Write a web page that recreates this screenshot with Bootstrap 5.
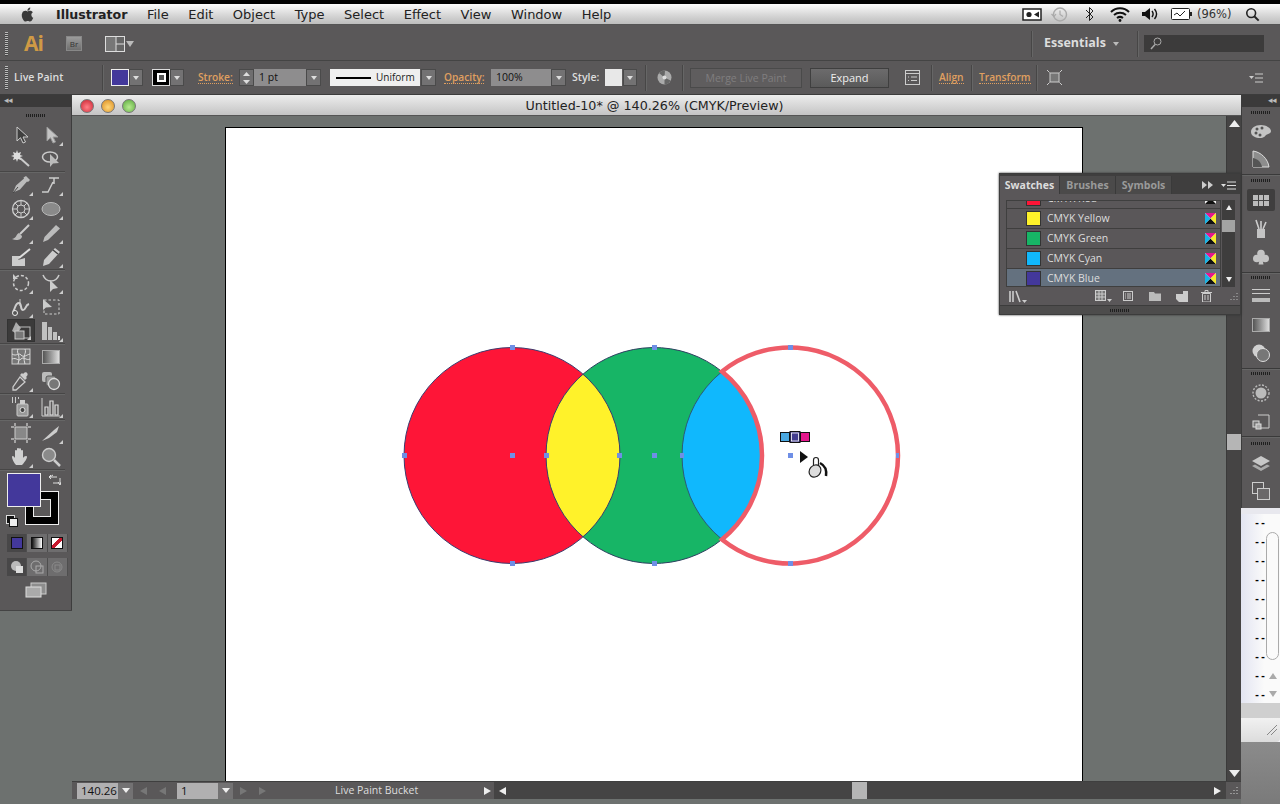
<!DOCTYPE html>
<html lang="en"><head><meta charset="utf-8"><title>Illustrator</title>
<link href="https://cdn.jsdelivr.net/npm/bootstrap@5.3.0/dist/css/bootstrap.min.css" rel="stylesheet">
<script src="https://cdn.jsdelivr.net/npm/bootstrap@5.3.0/dist/js/bootstrap.bundle.min.js"></script>
<style>
html,body{height:804px;overflow:hidden}
body{background:#6d716f;font-family:"Open Sans","Liberation Sans",sans-serif;font-size:11px;color:#ddd}
svg{display:block;flex:none}
.stage{width:1280px;height:804px}
.stage>*{flex:none}
.topblack{height:4px;background:#000}
.macbar{height:21px;background:linear-gradient(#fbfbfb,#d4d4d4 60%,#bdbdbd);border-bottom:1px solid #555;color:#222;font:13px "DejaVu Sans","Liberation Sans",sans-serif;padding-left:19px}
.macmenu{gap:19.5px;margin-left:20px;align-items:baseline}
.macmenu b{font-size:12.6px}
.pct{font-size:11.5px;width:31px;white-space:nowrap;color:#333}
.appbar{height:36px;background:#5a5859;border-bottom:1px solid #444;padding-top:2px}
.ailogo{font:bold 21px "Open Sans",sans-serif;color:#cf9a45;margin:-2px 0 0 16px;width:24px;letter-spacing:-1px}
.brbox{width:16px;height:15px;background:linear-gradient(#9b9b9b,#6f6f6f);border:1px solid #888;color:#333;font-size:8px;text-align:center;line-height:13px;margin-left:18px}
.ess{font-weight:700;font-size:12.5px;color:#ddd;width:62px;white-space:nowrap}
.searchbox{width:120px;height:17px;background:#3c3b3b;margin-left:6px;padding-left:6px;margin-right:16px}
.vdiv{width:1px;height:26px;background:#474646;box-shadow:1px 0 0 #666}
.grip{width:3px;height:24px;margin-left:5px;background:repeating-linear-gradient(#bbb 0 1px,#444 1px 2px)}
.ctlbar{height:34px;background:#5a5859;border-bottom:1px solid #3c3c3c}
.ctlbar .lbl{font-size:10.5px;color:#ddd;white-space:nowrap}
.orange{display:inline-block;margin-top:2px;color:#e0a060;font-size:10.2px;font-weight:600;white-space:nowrap;border-bottom:1px dotted #e0a060;line-height:12px}
.dd{height:17px;background:#737273;border:1px solid #4a4a4a;display:flex;align-items:center;justify-content:center}
.dd::after{content:"";border:3.5px solid transparent;border-top:4.5px solid #ddd;border-bottom:0}
.field{height:17px;background:#8e8d8e;color:#111;font-size:10.5px;line-height:17px;padding-left:5px}
.sw-blue{height:17px;background:#43389b;border:1px solid #eee}
.sw-white{height:17px;background:#e8e8e8}
.strokebtn{height:17px;background:#000;border:1px solid #ddd;display:flex;align-items:center;justify-content:center}
.strokebtn::after{content:"";width:9px;height:9px;border:2px solid #fff;background:#555}
.unif{height:17px;background:#efefef;color:#222;font-size:10px;display:flex;align-items:center;gap:5px;padding-left:6px}
.unif i{display:block;width:35px;height:2px;background:#000}
.spin{height:17px;background:#6f6e6f;border:1px solid #4a4a4a}
.btn.flat{height:20px;padding:0;font-size:11px;line-height:18px;border-radius:0;border:1px solid #3f3f3f;--bs-btn-color:#eee}
.btn.flatoff{background:#5f5d5e;color:#7f7e7e;border-color:#4a4a4a;font-size:10.5px}
.btn.flaton{background:linear-gradient(#6c6b6c,#5a5a5a);color:#eee;}
.g1{margin-left:1px}.g5{margin-left:5px}.g6{margin-left:6px}.g7{margin-left:7px}.g8{margin-left:8px}.g9{margin-left:9px}.g10{margin-left:10px}.g11{margin-left:11px}.g12{margin-left:12px}.g13{margin-left:13px}.g14{margin-left:14px}.g15{margin-left:15px}.g16{margin-left:16px}.g17{margin-left:17px}.g18{margin-left:18px}.g23{margin-left:23px}.g42{margin-left:42px}.g65{margin-left:65px}.g67{margin-left:67px}.g68{margin-left:68px}
.wd14{width:14px}.wd15{width:15px}.wd16{width:16px}.wd17{width:17px}.wd18{width:18px}.wd26{width:26px}.wd27{width:27px}.wd33{width:33px}.wd39{width:39px}.wd46{width:46px}.wd50{width:50px}.wd52{width:52px}.wd60{width:60px}.wd79{width:79px}.wd90{width:90px}.wd112{width:112px}
.mr17{margin-right:17px}.mr20{margin-right:20px}
.workrow{height:709px}
.leftcol{width:72px;flex:none}
.toolpanel{width:72px;height:515px;background:#5a5859;border-right:1px solid #3d3d3d;box-shadow:0 1px 0 #444}
.pnlhead{height:12px;background:#3b3a3a;color:#bbb;font-size:9px;line-height:10px;padding-left:4px;letter-spacing:-1px;flex:none}
.griprow{height:16px;display:flex;align-items:center;justify-content:center}
.gripx{width:20px;height:3px;background:repeating-linear-gradient(90deg,#1f1f1f 0 1px,transparent 1px 2px)}
.toolgrp{display:grid;grid-template-columns:30px 30px;grid-auto-rows:24px;padding-left:6px;border-bottom:1px solid #474646;box-shadow:0 1px 0 #666;margin-bottom:1px;margin-right:6px}
.tool{position:relative;display:flex;align-items:center;justify-content:center}
.tool.more::after{content:"";position:absolute;right:3px;bottom:1px;border:2px solid transparent;border-right-color:#ccc;border-bottom-color:#ccc}
.tool.sel{background:#3b3a3a;border:1px solid #333;margin:0 1px -1px 1px;height:23px}
.gradbox{width:18px;height:14px;border:1px solid #aaa;background:linear-gradient(90deg,#555,#ddd)}
.colors{position:relative;height:56px;margin-top:3px}
.fillbox{position:absolute;left:7px;top:0;width:34px;height:34px;background:#43389b;border:1px solid #eee;z-index:2}
.strokebox{position:absolute;left:25px;top:18px;width:34px;height:34px;background:#000;border:1px solid #eee;display:flex;align-items:center;justify-content:center}
.strokebox::after{content:"";width:18px;height:18px;background:#5a5859;border:1px solid #eee}
.swapic{position:absolute;left:49px;top:1px}
.defic{position:absolute;left:6px;top:42px}
.modes{display:flex;width:61px;height:18px;margin:5px 0 6px 7px;background:#6e6d6e}
.modes>div{flex:1;display:flex;align-items:center;justify-content:center;border-right:1px solid #4e4e4e}
.modes>div:first-child{background:#484748}
.m-blue,.m-grad,.m-none{width:12px;height:12px;border:1px solid #111}
.m-blue{background:#43389b}.m-grad{background:linear-gradient(90deg,#111,#fff)}
.m-none{background:linear-gradient(135deg,#fff 38%,#c8192f 38% 62%,#fff 62%)}
.docwin{width:1169px;flex:none;position:relative}
.titlebar{height:21px;background:linear-gradient(#ededed,#c4c4c4);border-bottom:1px solid #555;color:#222;font:12.7px/20px "DejaVu Sans","Liberation Sans",sans-serif;position:relative;text-align:center;padding:1px 4px 0 0}
.lights{position:absolute;left:8px;top:4px;gap:7px}
.light{width:14px;height:14px;border-radius:50%;border:1px solid #777}
.l-r{background:radial-gradient(circle at 50% 60%,#ff7f86,#c9202e)}
.l-y{background:radial-gradient(circle at 50% 60%,#ffd77a,#d98a1c)}
.l-g{background:radial-gradient(circle at 50% 60%,#b6e98f,#59a93b)}
.docmid{height:665px}
.canvasbg{flex:1;background:#6d716f;padding:11px 0 0 153px;overflow:hidden}
.artboard{width:858px;height:654px;background:#fff;border:1px solid #000;border-bottom:0;overflow:hidden}
.vscroll{width:15px;background:#454444;flex:none;border-left:1px solid #3a3a3a}
.spacer-a{height:307px}
.vthumb{height:16px;background:#b5b5b5}
.statusbar{height:18px;background:#5a5859;border-top:1px solid #3f3f3f;color:#ddd;font-size:10.5px}
.sfield{height:16px;background:#b1b0b1;color:#111;line-height:16px;padding-left:4px;overflow:hidden;white-space:nowrap;font-size:11.5px}
.sdd{height:16px;background:#737273;display:flex;align-items:center;justify-content:center}
.sdd::after{content:"";border:4px solid transparent;border-top:5px solid #eee;border-bottom:0}
.wd41{width:41px}.stxt{width:82px;text-align:center;white-space:nowrap}
.hscroll{width:732px;margin-left:3px;background:#454444;height:100%;position:relative;padding:0 5px}
.hthumb{position:absolute;left:358px;top:0;width:15px;height:17px;background:#b5b5b5}
.rcorner{width:15px;height:100%;display:flex;align-items:center;justify-content:center}
.tri-l,.tri-r{border:4.5px solid transparent;display:block;width:0;height:0}
.tri-l{border-right:7px solid #eee;border-left:0}.tri-r{border-left:7px solid #eee;border-right:0}
.tri-ld{border-right-color:#777}.tri-rd{border-left-color:#777}
.navgap{gap:12px;width:30px}
.swpanel{position:absolute;left:927px;top:78px;width:242px;height:142px;background:#5a5759;border:1px solid #3c3c3c;box-shadow:0 0 2px #333}
.swtabs{height:20px;background:#3f3e3e;border:0;padding-top:2px;--bs-nav-link-padding-x:0;--bs-nav-link-padding-y:0}
.swtab{height:18px;line-height:18px;font-weight:700;font-size:10.5px;color:#9a9a9a;text-align:center;background:#4b4a4a;border-right:1px solid #3a3a3a;width:56px}
.swtab.on{background:#5a5759;color:#ddd;width:60px}
.swbody{height:87px;margin:6px 5px 0 6px}
.swlist{flex:1;overflow:hidden;background:#5a5759;border:1px solid #3f3f3f;height:87px}
.swlist .list-group{margin-top:-12px;--bs-list-group-bg:transparent;--bs-list-group-border-color:#3f3e3e;--bs-list-group-border-radius:0}
.swrow{height:20px;display:flex;align-items:center;padding:0 4px 0 19px;background:#5a5759;color:#ddd;font-size:10.5px;gap:6px;border-width:0 0 1px 0}
.swrow.cur{background:#64717f}
.chip{width:15px;height:15px;border:1px solid #333;flex:none}
.chip-r{background:#fe1537}.chip-y{background:#fff22a}.chip-g{background:#17b566}.chip-c{background:#10b8fd}.chip-b{background:#43389b}
.swname{flex:1}
.swscroll{width:13px;background:#3e3d3d;margin-left:1px;display:flex;flex-direction:column;align-items:center;position:relative}
.swthumb{width:100%;height:12px;background:#a3a3a3;position:absolute;top:20px}
.up,.down{border:3.5px solid transparent;width:0;height:0;position:absolute}
.up{border-bottom:5px solid #eee;border-top:0;top:5px}.down{border-top:5px solid #eee;border-bottom:0;bottom:5px}
.swtools{height:18px;padding:0 2px 0 9px}
.swfoot{height:9px;background:#4d4c4c;border-top:1px solid #3c3c3c;display:flex;align-items:center;justify-content:center}
.dock{width:39px;flex:none}
.dockpanel{background:#5a5859;height:413px;border-left:1px solid #3c3c3c}
.dg{border-bottom:1px solid #3a3a3a;box-shadow:0 1px 0 #666;display:flex;flex-direction:column;align-items:center;flex:none}
.dg1{height:68px}.dg2{height:98px}.dg3{height:96px}.dg4{height:68px}.dg5{flex:1;box-shadow:none;border:0}
.dgrip{height:11px;display:flex;align-items:center;flex:none}
.dg3 .dgrip,.dg4 .dgrip{height:9px}
.dg5 .dgrip{height:13px}
.dc27,.dc28,.dc29{display:flex;align-items:center;justify-content:center;width:100%;flex:none}
.dc27{height:27px}.dc28{height:28.5px}.dc29{height:29px}
.dsel{background:#3f3e3e;width:28px;height:22px;border-radius:2px;display:flex;align-items:center;justify-content:center}
.notepad{height:234px;position:relative;background:#f4f4f8;overflow:hidden}
.noteline{height:19.1px;font:bold 10px/19px "Liberation Mono",monospace;color:#000;padding-left:13px;background:linear-gradient(90deg,#e3e5f2,#fafafa 60%)}
.notehd{height:6px;background:#e8e8ee}
.capsule{position:absolute;left:25px;top:24px;width:13px;height:128px;border:1px solid #aaa;border-radius:7px;background:#fafafa}
.noteup,.notedn{position:absolute;left:28px;width:0;height:0;border:4px solid transparent}
.noteup{top:165px;border-bottom:6px solid #aaa;border-top:0}
.notedn{top:183px;border-top:6px solid #aaa;border-bottom:0}
.notefoot{position:absolute;left:0;right:0;top:195px;height:39px;background:linear-gradient(#cfcfcf 0 15px,#f1f1f1 15px,#dcdcdc);border-radius:0 0 4px 0}
.noteres{position:absolute;left:25px;top:21px}
.dockbase{height:62px;background:linear-gradient(#8b8b8b,#7a7a7a)}
</style></head>
<body>
<div class="stage d-flex flex-column">
<div class="topblack"></div>
<nav class="macbar d-flex align-items-center">
 <svg width="17" height="19" viewBox="0 0 24 24"><path fill="#3a3a3a" d="M18.71 19.5c-.83 1.24-1.71 2.45-3.05 2.47-1.34.03-1.77-.79-3.29-.79-1.53 0-2 .77-3.27.82-1.31.05-2.3-1.32-3.14-2.53C4.25 17 2.94 12.45 4.7 9.39c.87-1.52 2.43-2.48 4.12-2.51 1.28-.02 2.5.87 3.29.87.78 0 2.26-1.07 3.81-.91.65.03 2.47.26 3.64 1.98-.09.06-2.17 1.28-2.15 3.81.03 3.02 2.65 4.03 2.68 4.04-.03.07-.42 1.44-1.38 2.83M13 3.5c.73-.83 1.94-1.46 2.94-1.5.13 1.17-.34 2.35-1.04 3.19-.69.85-1.83 1.51-2.95 1.42-.15-1.15.41-2.35 1.05-3.11z"/></svg>
 <div class="macmenu d-flex"><b>Illustrator</b><span>File</span><span>Edit</span><span>Object</span><span>Type</span><span>Select</span><span>Effect</span><span>View</span><span>Window</span><span>Help</span></div>
 <svg class="ms-auto" width="20" height="14" viewBox="0 0 20 14"><rect x="1" y="2" width="18" height="11" fill="#fff" stroke="#222" stroke-width="1.5"/><circle cx="7" cy="7.5" r="2.6" fill="#222"/><path d="M12 7.5l5-3v6z" fill="#222"/></svg>
 <svg class="g9" width="17" height="17" viewBox="0 0 17 17"><circle cx="9" cy="8.5" r="6.5" fill="none" stroke="#aaa" stroke-width="1.4"/><path d="M9 4.5v4l3 2M.5 8l2.5 2.5L5 8" fill="none" stroke="#aaa" stroke-width="1.2"/></svg>
 <svg class="g17" width="10" height="16" viewBox="0 0 10 16"><path d="M1 4l7 7-3.500 3.500V1.500L8 5 1 12" fill="none" stroke="#222"/></svg>
 <svg class="g15" width="20" height="15" viewBox="0 0 20 15"><path d="M1 5c5-5 13-5 18 0M4 8c3.500-3 8.500-3 12 0M7 11c2-1.500 4-1.500 6 0" fill="none" stroke="#111" stroke-width="2"/><circle cx="10" cy="13.500" r="1.400" fill="#111"/></svg>
 <svg class="g11" width="18" height="14" viewBox="0 0 18 14"><path d="M1 5h3l5-4v12l-5-4H1z" fill="#111"/><path d="M11 4c1.500 2 1.500 4 0 6M13.500 2c2.500 3 2.500 7 0 10" fill="none" stroke="#111" stroke-width="1.400"/></svg>
 <svg class="g12" width="21" height="12" viewBox="0 0 21 12"><rect x=".5" y=".5" width="18" height="11" rx="1" fill="#fff" stroke="#222"/><path d="M3 7l3-2 3 3 5-5" fill="none" stroke="#222"/><rect x="19" y="4" width="2" height="4" fill="#222"/></svg>
 <span class="g5 pct">(96%)</span>
 <svg class="g17 mr20" width="15" height="16" viewBox="0 0 17 16"><circle cx="7" cy="7" r="5" fill="none" stroke="#222" stroke-width="1.800"/><path d="M10.500 10.500l5 5" stroke="#222" stroke-width="2.200"/></svg>
</nav>
<header class="appbar d-flex align-items-center">
 <div class="grip"></div>
 <div class="ailogo">Ai</div>
 <div class="brbox">Br</div>
 <svg class="g23" width="20" height="16" viewBox="0 0 20 16"><rect x=".5" y=".5" width="19" height="15" fill="#666" stroke="#ddd"/><rect x="1" y="1" width="10" height="14" fill="#777"/><path d="M11 .5v15M11 8h8" stroke="#ddd"/></svg>
 <svg class="g1" width="8" height="6" viewBox="0 0 8 6"><path d="M0 0h8L4 6z" fill="#bbb"/></svg>
 <div class="vdiv ms-auto"></div>
 <div class="ess g12">Essentials</div>
 <svg class="g7" width="6" height="4" viewBox="0 0 6 4"><path d="M0 0h6L3 4z" fill="#bbb"/></svg>
 <div class="vdiv g18"></div>
 <div class="searchbox d-flex align-items-center"><svg width="12" height="13" viewBox="0 0 12 13"><circle cx="7.500" cy="4.500" r="3.500" fill="none" stroke="#aaa"/><path d="M5 7.500L1 12" stroke="#aaa" stroke-width="1.500"/></svg></div>
</header>
<section class="ctlbar d-flex align-items-center">
 <div class="grip"></div>
 <div class="lbl g6 wd46 fw-semibold">Live Paint</div>
 <div class="vdiv g42"></div>
 <div class="sw-blue g8 wd18"></div><div class="dd wd14"></div>
 <div class="strokebtn g9 wd18"></div><div class="dd wd14"></div>
 <div class="g14 wd33"><span class="orange">Stroke:</span></div>
 <div class="spin g8 wd15 d-flex flex-column align-items-center justify-content-center gap-1"><svg width="7" height="4" viewBox="0 0 7 4"><path d="M0 4h7L3.500 0z" fill="#ddd"/></svg><svg width="7" height="4" viewBox="0 0 7 4"><path d="M0 0h7L3.500 4z" fill="#ddd"/></svg></div>
 <div class="field wd52">1 pt</div><div class="dd wd15"></div>
 <div class="unif g9 wd90"><i></i><span>Uniform</span></div><div class="dd g1 wd15"></div>
 <div class="g8 wd39"><span class="orange">Opacity:</span></div>
 <div class="field g8 wd60">100%</div><div class="dd wd15"></div>
 <div class="lbl g6 wd27 fw-semibold">Style:</div>
 <div class="sw-white g6 wd17"></div><div class="dd g1 wd14"></div>
 <div class="vdiv g8"></div>
 <svg class="g11" width="15" height="15" viewBox="0 0 15 15"><circle cx="7.500" cy="7.500" r="7" fill="#aaa"/><path d="M7.500 7.500L2 3a7 7 0 0 1 6-2.500zM7.500 7.500l6 3a7 7 0 0 1-6 4z" fill="#666"/><circle cx="7.500" cy="7.500" r="2" fill="#ddd"/></svg>
 <div class="vdiv g10"></div>
 <button class="btn flat flatoff g7 wd112">Merge Live Paint</button>
 <button class="btn flat flaton g8 wd79">Expand</button>
 <svg class="g16" width="15" height="15" viewBox="0 0 15 15"><rect x=".5" y=".5" width="14" height="14" fill="none" stroke="#ccc"/><path d="M.5 3.500h14M3 7h1M6 7h6M3 10.500h1M6 10.500h6" stroke="#ccc"/></svg>
 <div class="vdiv g11"></div>
 <div class="g7 wd26"><span class="orange">Align</span></div>
 <div class="vdiv g6"></div>
 <div class="g7 wd50"><span class="orange">Transform</span></div>
 <div class="vdiv g7"></div>
 <svg class="g10" width="15" height="15" viewBox="0 0 15 15"><rect x="3" y="3" width="9" height="9" fill="#777" stroke="#ccc"/><path d="M0 0l2.500 2.500M15 0l-2.500 2.500M0 15l2.500-2.500M15 15l-2.500-2.500" stroke="#ccc"/></svg>
 <svg class="ms-auto mr17" width="14" height="10" viewBox="0 0 14 10"><path d="M0 3h5L2.500 6z" fill="#ccc"/><path d="M6 1h8M6 5h8M6 9h8" stroke="#ccc"/></svg>
</section>

<div class="workrow d-flex">
 <aside class="leftcol">
  <div class="toolpanel">
   <div class="pnlhead">◂◂</div>
   <div class="griprow"><div class="gripx"></div></div>
   <div class="toolgrp">
    <div class="tool"><svg width="20" height="20" viewBox="0 0 20 20"><path d="M6 2v14l3.500-3.300L12 18l2.500-1-2.500-5h5z" fill="#3f3f3f" stroke="#ccc"/></svg></div>
    <div class="tool more"><svg width="20" height="20" viewBox="0 0 20 20"><path d="M6 2v14l3.500-3.300L12 18l2.500-1-2.500-5h5z" fill="#c4c4c4" stroke="#999"/></svg></div>
    <div class="tool"><svg width="20" height="20" viewBox="0 0 20 20"><path d="M9 9l9 8" stroke="#ccc" stroke-width="2"/><path d="M6 1l1 3 3-1-1 3 3 1-3 1 1 3-3-1-1 3-1-3-3 1 1-3-3-1 3-1-1-3 3 1z" fill="#ddd"/></svg></div>
    <div class="tool"><svg width="20" height="20" viewBox="0 0 20 20"><ellipse cx="9" cy="8" rx="7.500" ry="5" fill="none" stroke="#ccc" stroke-width="1.500"/><path d="M9 5v13l3-3.500 6-.5z" fill="#bbb"/></svg></div>
   </div>
   <div class="toolgrp">
    <div class="tool more"><svg width="20" height="20" viewBox="0 0 20 20"><path d="M15 1l4 4-2 2-1-.5-7 8-7 3 3-7 8-7-.5-1z" fill="#bbb"/><path d="M2 18l5-6" stroke="#444"/></svg></div>
    <div class="tool more"><svg width="20" height="20" viewBox="0 0 20 20"><path d="M1 17h6l5-10M8 3h10M13 3v6" fill="none" stroke="#ccc" stroke-width="1.500"/></svg></div>
    <div class="tool more"><svg width="20" height="20" viewBox="0 0 20 20"><circle cx="10" cy="10" r="8.500" fill="none" stroke="#ccc" stroke-width="1.300"/><circle cx="10" cy="10" r="4" fill="none" stroke="#ccc"/><path d="M10 2v4M10 14v4M2 10h4M14 10h4M4 4l3 3M13 13l3 3M16 4l-3 3M4 16l3-3" stroke="#ccc"/></svg></div>
    <div class="tool more"><svg width="20" height="20" viewBox="0 0 20 20"><ellipse cx="10" cy="10" rx="9" ry="6.500" fill="#8a8a8a" stroke="#bbb"/></svg></div>
    <div class="tool more"><svg width="20" height="20" viewBox="0 0 20 20"><path d="M18 2l-9 9" stroke="#ccc" stroke-width="2"/><path d="M8 10c-3 1-2 5-7 6 4 2 10 1 10-3z" fill="#bbb"/></svg></div>
    <div class="tool more"><svg width="20" height="20" viewBox="0 0 20 20"><path d="M15 2l4 3.500L7 17l-5 2 1.500-5z" fill="#bbb"/></svg></div>
    <div class="tool"><svg width="20" height="20" viewBox="0 0 20 20"><path d="M1 9h9l-3 4 7-2v8H1z" fill="#ccc"/><path d="M19 2l-11 9" stroke="#ddd" stroke-width="2"/></svg></div>
    <div class="tool more"><svg width="20" height="20" viewBox="0 0 20 20"><path d="M14 1l5 4-11 12-6 2 1-6z" fill="#ccc"/><path d="M12 3l5 4" stroke="#444" stroke-width="1.500"/></svg></div>
   </div>
   <div class="toolgrp">
    <div class="tool more"><svg width="20" height="20" viewBox="0 0 20 20"><circle cx="10" cy="10" r="7.500" fill="none" stroke="#ccc" stroke-width="1.500" stroke-dasharray="3 2"/><path d="M2 1v5h5z" fill="#ccc"/></svg></div>
    <div class="tool more"><svg width="20" height="20" viewBox="0 0 20 20"><path d="M2 2c2 5 5 6 8 6s6-1 8-6" fill="none" stroke="#ccc" stroke-width="1.500"/><path d="M9 7v12l3-3 5-1z" fill="#ccc"/></svg></div>
    <div class="tool more"><svg width="20" height="20" viewBox="0 0 20 20"><path d="M2 15c3-5 2-9 6-9 3 0 1 7 4 7 3 0 2-5 6-6" fill="none" stroke="#ccc" stroke-width="2"/><circle cx="4" cy="16" r="2.500" fill="#555" stroke="#eee"/><path d="M9 2v7" stroke="#ccc"/></svg></div>
    <div class="tool"><svg width="20" height="20" viewBox="0 0 20 20"><rect x="3" y="3" width="15" height="14" fill="none" stroke="#ccc" stroke-dasharray="2.500 2"/><path d="M2 2v11l3-2.500 6-.5z" fill="#ccc"/></svg></div>
    <div class="tool sel more"><svg width="22" height="20" viewBox="0 0 22 20"><path d="M6 1l5 6-4 6-5-3z" fill="#aaa"/><rect x="8" y="6" width="12" height="11" fill="none" stroke="#bbb"/><rect x="5" y="10" width="9" height="8" fill="#777" stroke="#ccc"/></svg></div>
    <div class="tool more"><svg width="20" height="20" viewBox="0 0 20 20"><path d="M1 1h5v18H1zM7 6h4v13H7zM12 11h4v8h-4z" fill="#c0c0c0"/><path d="M17 15h2v4h-2z" fill="#ddd"/></svg></div>
   </div>
   <div class="toolgrp">
    <div class="tool"><svg width="20" height="18" viewBox="0 0 20 18"><rect x="1" y="1" width="18" height="15" fill="#777" stroke="#ccc"/><path d="M1 6c5 3 6-2 9 1s5 0 9-1M1 11c5-2 6 3 9 0s5 2 9 0M7 1c-2 5 3 5 0 15M14 1c2 5-3 5 0 15" fill="none" stroke="#ddd"/></svg></div>
    <div class="tool"><div class="gradbox"></div></div>
    <div class="tool more"><svg width="20" height="20" viewBox="0 0 20 20"><path d="M13 2c2-2 5 1 3 3l-1 1 1 1-2 2-5-5 2-2 1 1z" fill="#ccc"/><path d="M9 6l5 5-9 8-3 0 0-3z" fill="none" stroke="#ccc" stroke-width="1.300"/></svg></div>
    <div class="tool"><svg width="20" height="20" viewBox="0 0 20 20"><rect x="1" y="1" width="10" height="10" rx="2" fill="#bbb"/><rect x="5" y="5" width="10" height="10" rx="2" fill="#999" stroke="#555"/><circle cx="13" cy="13" r="5.500" fill="#777" stroke="#ddd" stroke-width="1.300"/></svg></div>
   </div>
   <div class="toolgrp">
    <div class="tool more"><svg width="20" height="20" viewBox="0 0 20 20"><rect x="6" y="7" width="11" height="12" rx="1" fill="#999" stroke="#ccc"/><circle cx="11.500" cy="13" r="2.500" fill="#444" stroke="#ddd"/><rect x="9" y="3" width="5" height="4" fill="#ccc"/><path d="M1 1h1M4 1h1M7 1h1M1 3h1M4 3h1M1 5h1M4 5h1" stroke="#eee" stroke-width="1.500"/></svg></div>
    <div class="tool more"><svg width="20" height="20" viewBox="0 0 20 20"><path d="M1 1v18h18" fill="none" stroke="#ccc"/><path d="M4 10h3v8H4zM9 4h3v14H9zM14 8h3v10h-3z" fill="none" stroke="#ddd" stroke-width="1.200"/></svg></div>
   </div>
   <div class="toolgrp">
    <div class="tool"><svg width="20" height="20" viewBox="0 0 20 20"><rect x="4" y="4" width="12" height="12" fill="#888" stroke="#ccc"/><path d="M0 4h3M17 4h3M0 16h3M17 16h3M4 0v3M4 17v3M16 0v3M16 17v3" stroke="#eee"/></svg></div>
    <div class="tool more"><svg width="20" height="20" viewBox="0 0 20 20"><path d="M1 18L13 7l5-4-2 6-8 6z" fill="#ccc"/></svg></div>
    <div class="tool more"><svg width="20" height="20" viewBox="0 0 20 20"><path d="M5 18c-2-2-4-6-4-8s2-1 3 1V4c0-1.500 2-1.500 2 0v-2c0-1.500 2-1.500 2 0v0c0-1 2-1 2 0v2c0-1.500 2-1.500 2 0v7c1-2 4-3 4-1s-3 6-5 8z" fill="#d0d0d0"/></svg></div>
    <div class="tool"><svg width="20" height="20" viewBox="0 0 20 20"><circle cx="8" cy="8" r="6.500" fill="#8a8a8a" stroke="#ccc" stroke-width="1.400"/><path d="M13 13l6 6" stroke="#ccc" stroke-width="2.500"/></svg></div>
   </div>
   <div class="colors">
    <div class="fillbox"></div><div class="strokebox"></div>
    <svg class="swapic" width="12" height="12" viewBox="0 0 12 12"><path d="M1 3h7M2 1L0 3l2 2M11 4v7M9 8l2 3 1-3M4 1L1 3M4 9h6" fill="none" stroke="#ddd"/></svg>
    <svg class="defic" width="12" height="12" viewBox="0 0 12 12"><rect x=".5" y=".5" width="8" height="8" fill="#111" stroke="#ddd"/><rect x="3.500" y="3.500" width="8" height="8" fill="#eee" stroke="#111"/></svg>
   </div>
   <div class="modes"><div><div class="m-blue"></div></div><div><div class="m-grad"></div></div><div><div class="m-none"></div></div></div>
   <div class="modes">
    <div><svg width="14" height="14" viewBox="0 0 14 14"><circle cx="6" cy="6" r="5" fill="#bbb"/><rect x="6" y="6" width="7" height="7" fill="#ddd"/></svg></div>
    <div><svg width="14" height="14" viewBox="0 0 14 14"><circle cx="6" cy="6" r="5" fill="none" stroke="#aaa"/><rect x="6" y="6" width="7" height="7" fill="none" stroke="#aaa"/></svg></div>
    <div><svg width="14" height="14" viewBox="0 0 14 14"><circle cx="7" cy="7" r="5" fill="none" stroke="#8a8a8a"/><rect x="5" y="5" width="5" height="5" fill="none" stroke="#8a8a8a"/></svg></div>
   </div>
   <div class="d-flex justify-content-center"><svg width="22" height="16" viewBox="0 0 22 16"><rect x="6" y="1" width="15" height="11" fill="#8d8d8d" stroke="#ccc"/><rect x="1" y="5" width="15" height="10" fill="#aaa" stroke="#ddd"/></svg></div>
  </div>
 </aside>

 <main class="docwin d-flex flex-column">
  <div class="titlebar">
   <div class="lights d-flex"><div class="light l-r"></div><div class="light l-y"></div><div class="light l-g"></div></div>
   Untitled-10* @ 140.26% (CMYK/Preview)
  </div>
  <div class="docmid d-flex">
   <div class="canvasbg">
    <div class="artboard">
     <svg width="856" height="653" viewBox="226 128 856 653">
      <defs><clipPath id="cg"><circle cx="654" cy="455.500" r="108"/></clipPath><clipPath id="cr"><circle cx="512" cy="455.500" r="108"/></clipPath><clipPath id="ct"><circle cx="790" cy="455.500" r="108"/></clipPath></defs>
      <circle cx="512" cy="455.500" r="108" fill="#fe1537"/>
      <circle cx="654" cy="455.500" r="108" fill="#17b566"/>
      <circle cx="654" cy="455.500" r="108" fill="#fff22a" clip-path="url(#cr)"/>
      <circle cx="654" cy="455.500" r="108" fill="#10b8fd" clip-path="url(#ct)"/>
      <circle cx="512" cy="455.500" r="108" fill="none" stroke="#3b3b6e" stroke-width="1"/>
      <circle cx="654" cy="455.500" r="108" fill="none" stroke="#3b3b6e" stroke-width="1" clip-path="url(#cr)"/>
      <path d="M583 374.200A108 108 0 0 1 722 371.600M722 539.400A108 108 0 0 1 583 536.800" fill="none" stroke="#2d4060"/>
      <circle cx="790" cy="455.500" r="108" fill="none" stroke="#2d5a78" clip-path="url(#cg)"/>
      <path d="M722 371.600A108 108 0 1 1 722 539.400A108 108 0 0 0 722 371.600Z" fill="none" stroke="#ee5c68" stroke-width="4.500"/>
      <g fill="#6f8fe6">
       <rect x="402" y="453" width="5" height="5"/><rect x="510" y="345" width="5" height="5"/><rect x="510" y="561" width="5" height="5"/><rect x="510" y="453" width="5" height="5"/><rect x="617" y="453" width="5" height="5"/>
       <rect x="544" y="453" width="5" height="5"/><rect x="652" y="345" width="5" height="5"/><rect x="652" y="561" width="5" height="5"/><rect x="652" y="453" width="5" height="5"/><rect x="680" y="453" width="4" height="5"/>
       <rect x="788" y="345" width="5" height="5"/><rect x="896" y="453" width="3" height="5"/><rect x="788" y="561" width="5" height="5"/><rect x="788" y="453" width="5" height="5"/>
      </g>
      <rect x="780.500" y="432.500" width="9" height="9" fill="#4aa8e0" stroke="#111"/>
      <rect x="800.500" y="432.500" width="9" height="9" fill="#e5188d" stroke="#111"/>
      <rect x="790" y="431.500" width="10" height="11" fill="#433c8f" stroke="#111" stroke-width="1"/>
      <rect x="791.500" y="433" width="7" height="8" fill="#433c8f" stroke="#fff" stroke-width=".8"/>
      <path d="M800 451v12l8-6z" fill="#111"/>
      <path d="M813.500 468v-8a2.500 2.500 0 0 1 5 0v8" fill="none" stroke="#222" stroke-width="1.200"/>
      <ellipse cx="815" cy="471" rx="5.500" ry="6.500" transform="rotate(40 815 471)" fill="#ddd" stroke="#222" stroke-width="1.200"/>
      <path d="M820 463c4 2 7 6 6 13" fill="none" stroke="#111" stroke-width="2.500"/>
     </svg>
    </div>
   </div>
   <div class="vscroll d-flex flex-column align-items-center">
    <svg class="mt-1" width="11" height="7" viewBox="0 0 11 7"><path d="M0 7h11L5.500 0z" fill="#eee"/></svg>
    <div class="flex-grow-1 w-100"><div class="spacer-a"></div><div class="vthumb"></div></div>
    <svg class="mb-1" width="11" height="7" viewBox="0 0 11 7"><path d="M0 0h11L5.500 7z" fill="#eee"/></svg>
   </div>
  </div>
  <div class="statusbar d-flex align-items-center">
   <div class="sfield wd41 g5">140.26</div><div class="sdd wd15"></div>
   <div class="navgap d-flex align-items-center g7"><span class="tri-l tri-ld"></span><span class="tri-l tri-ld"></span></div>
   <div class="sfield wd41 g7">1</div><div class="sdd wd15"></div>
   <div class="navgap d-flex align-items-center g7"><span class="tri-r tri-rd"></span><span class="tri-r tri-rd"></span></div>
   <div class="stxt g65">Live Paint Bucket</div>
   <span class="tri-r g67"></span>
   <div class="hscroll d-flex align-items-center justify-content-between"><span class="tri-l"></span><div class="hthumb"></div><span class="tri-r"></span></div>
   <div class="rcorner"><svg width="9" height="9" viewBox="0 0 9 9"><path d="M8 1v1M5 4v1M8 4v1M2 7v1M5 7v1M8 7v1" stroke="#aaa" stroke-width="1.500"/></svg></div>
  </div>
  <div class="swpanel">
   <ul class="nav swtabs d-flex">
    <li class="swtab on">Swatches</li><li class="swtab">Brushes</li><li class="swtab">Symbols</li>
    <li class="ms-auto d-flex align-items-center gap-2 pe-1">
     <svg width="11" height="8" viewBox="0 0 11 8"><path d="M0 0l5 4-5 4zM6 0l5 4-5 4z" fill="#ccc"/></svg>
     <svg width="15" height="9" viewBox="0 0 15 9"><path d="M0 3h5L2.500 6z" fill="#ddd"/><path d="M6 1h9M6 4.500h9M6 8h9" stroke="#ddd"/></svg>
    </li>
   </ul>
   <div class="swbody d-flex">
    <div class="swlist"><div class="list-group">
     <div class="list-group-item swrow"><span class="chip chip-r"></span><span class="swname">CMYK Red</span><svg width="11" height="11" viewBox="0 0 11 11"><rect width="11" height="11" fill="#eee"/><path d="M0 11h11L5.500 5.500z" fill="#111"/></svg></div>
     <div class="list-group-item swrow"><span class="chip chip-y"></span><span class="swname">CMYK Yellow</span><svg width="11" height="11" viewBox="0 0 11 11"><rect width="11" height="11" fill="#eee"/><path d="M0 0h11L5.500 5.500z" fill="#e5188d"/><path d="M0 11h11L5.500 5.500z" fill="#111"/><path d="M0 0v11l5.500-5.500z" fill="#17b5e8"/><path d="M11 0v11L5.500 5.500z" fill="#f5e82a"/></svg></div>
     <div class="list-group-item swrow"><span class="chip chip-g"></span><span class="swname">CMYK Green</span><svg width="11" height="11" viewBox="0 0 11 11"><rect width="11" height="11" fill="#eee"/><path d="M0 0h11L5.500 5.500z" fill="#e5188d"/><path d="M0 11h11L5.500 5.500z" fill="#111"/><path d="M0 0v11l5.500-5.500z" fill="#17b5e8"/><path d="M11 0v11L5.500 5.500z" fill="#f5e82a"/></svg></div>
     <div class="list-group-item swrow"><span class="chip chip-c"></span><span class="swname">CMYK Cyan</span><svg width="11" height="11" viewBox="0 0 11 11"><rect width="11" height="11" fill="#eee"/><path d="M0 0h11L5.500 5.500z" fill="#e5188d"/><path d="M0 11h11L5.500 5.500z" fill="#111"/><path d="M0 0v11l5.500-5.500z" fill="#17b5e8"/><path d="M11 0v11L5.500 5.500z" fill="#f5e82a"/></svg></div>
     <div class="list-group-item swrow cur"><span class="chip chip-b"></span><span class="swname">CMYK Blue</span><svg width="11" height="11" viewBox="0 0 11 11"><rect width="11" height="11" fill="#eee"/><path d="M0 0h11L5.500 5.500z" fill="#e5188d"/><path d="M0 11h11L5.500 5.500z" fill="#111"/><path d="M0 0v11l5.500-5.500z" fill="#17b5e8"/><path d="M11 0v11L5.500 5.500z" fill="#f5e82a"/></svg></div>
    </div></div>
    <div class="swscroll"><span class="up"></span><span class="swthumb"></span><span class="down"></span></div>
   </div>
   <div class="swtools d-flex align-items-center">
    <svg width="18" height="13" viewBox="0 0 18 13"><path d="M1 1v11M4 1v11M7 1l4 11" stroke="#ccc" stroke-width="1.600"/><path d="M13 10h5l-2.500 3z" fill="#ccc"/></svg>
    <svg class="g68" width="17" height="12" viewBox="0 0 17 12"><rect x=".5" y=".5" width="10" height="10" fill="#777" stroke="#ccc"/><path d="M4 .5v10M7 .5v10M.5 4h10M.5 7h10" stroke="#ccc"/><path d="M12 9h5l-2.500 3z" fill="#ccc"/></svg>
    <svg class="g11" width="10" height="10" viewBox="0 0 10 10"><rect x=".5" y=".5" width="9" height="9" fill="none" stroke="#ccc"/><path d="M2 3h1M4 3h4M2 5h1M4 5h4M2 7h1M4 7h4" stroke="#ccc"/></svg>
    <svg class="g16" width="12" height="10" viewBox="0 0 12 10"><path d="M0 1h5l1 1.500h6V10H0z" fill="#bbb"/></svg>
    <svg class="g15" width="12" height="11" viewBox="0 0 12 11"><path d="M0 3h7V0h5v11H3L0 8z" fill="#ccc"/></svg>
    <svg class="g13" width="11" height="12" viewBox="0 0 11 12"><path d="M0 2.500h11M4 2V.500h3V2M1.500 3.500h8V12h-8zM4 5v5M7 5v5" fill="none" stroke="#ccc"/></svg>
    <svg class="ms-auto" width="9" height="9" viewBox="0 0 9 9"><path d="M8 1v1M5 4v1M8 4v1M2 7v1M5 7v1M8 7v1" stroke="#999" stroke-width="1.500"/></svg>
   </div>
   <div class="swfoot"><div class="gripx"></div></div>
  </div>
 </main>

 <aside class="dock">
  <div class="dockpanel d-flex flex-column">
   <div class="pnlhead text-end pe-1">◂◂</div>
   <div class="dg dg1"><div class="dgrip"><div class="gripx"></div></div>
    <div class="dc27"><svg width="20" height="15" viewBox="0 0 20 15"><path d="M10 1C4 1 0 4 0 8s5 6 9 6 5-2 6-3 5-1 5-4-5-6-10-6z" fill="#c4c4c4"/><circle cx="5" cy="9" r="1.500" fill="#555"/><circle cx="9" cy="11" r="1.500" fill="#555"/><circle cx="6" cy="5" r="1.500" fill="#555"/><circle cx="11" cy="4" r="1.500" fill="#555"/></svg></div>
    <div class="dc27"><svg width="18" height="18" viewBox="0 0 18 18"><path d="M1 1c8 1 15 8 16 16H1z" fill="#8d8d8d" stroke="#ddd"/><path d="M1 8c5 1 8 4 9 9H1z" fill="#555"/></svg></div>
   </div>
   <div class="dg dg2"><div class="dgrip"><div class="gripx"></div></div>
    <div class="dc28"><div class="dsel"><svg width="16" height="11" viewBox="0 0 16 11"><rect width="16" height="11" fill="#bbb"/><path d="M5.500 0v11M10.500 0v11M0 5.500h16" stroke="#444"/></svg></div></div>
    <div class="dc28"><svg width="16" height="20" viewBox="0 0 16 20"><rect x="4" y="10" width="8" height="9" fill="#c4c4c4"/><path d="M6 10L3 1M8 10V2M10 10l3-7" stroke="#ccc" stroke-width="1.600"/></svg></div>
    <div class="dc28"><svg width="16" height="16" viewBox="0 0 16 16"><circle cx="8" cy="4.500" r="3.800" fill="#c4c4c4"/><circle cx="3.800" cy="9.500" r="3.800" fill="#c4c4c4"/><circle cx="12.200" cy="9.500" r="3.800" fill="#c4c4c4"/><path d="M7 8h2l1.500 7.500h-5z" fill="#c4c4c4"/></svg></div>
   </div>
   <div class="dg dg3"><div class="dgrip"><div class="gripx"></div></div>
    <div class="dc28"><svg width="18" height="14" viewBox="0 0 18 14"><path d="M0 .5h18M0 4.500h18" stroke="#ccc"/><rect y="9" width="18" height="4" fill="#bbb"/></svg></div>
    <div class="dc28"><div class="gradbox"></div></div>
    <div class="dc28"><svg width="18" height="18" viewBox="0 0 18 18"><circle cx="7" cy="7" r="6.500" fill="#d0d0d0"/><circle cx="11" cy="11" r="6.500" fill="#777" stroke="#ddd"/></svg></div>
   </div>
   <div class="dg dg4"><div class="dgrip"><div class="gripx"></div></div>
    <div class="dc29"><svg width="18" height="18" viewBox="0 0 18 18"><circle cx="9" cy="9" r="8" fill="none" stroke="#bbb" stroke-width="1.400" stroke-dasharray="2 1.500"/><circle cx="9" cy="9" r="5.500" fill="#bbb"/></svg></div>
    <div class="dc29"><svg width="18" height="16" viewBox="0 0 18 16"><path d="M6 1h11v13H9" fill="none" stroke="#ccc"/><rect x="1" y="7" width="6" height="6" fill="#777" stroke="#ddd"/><rect x="4" y="10" width="5" height="5" fill="#aaa" stroke="#ddd"/></svg></div>
   </div>
   <div class="dg dg5"><div class="dgrip"><div class="gripx"></div></div>
    <div class="dc27"><svg width="18" height="15" viewBox="0 0 18 15"><path d="M9 0l9 5-9 5-9-5z" fill="#c8c8c8"/><path d="M3 8.500L9 12l6-3.500 3 1.500-9 5-9-5z" fill="#aaa"/></svg></div>
    <div class="dc27"><svg width="18" height="18" viewBox="0 0 18 18"><rect x=".5" y=".5" width="11" height="11" fill="#5a5859" stroke="#ccc"/><rect x="5.500" y="6.500" width="12" height="11" fill="#6a6869" stroke="#ccc"/></svg></div>
   </div>
  </div>
  <div class="notepad">
   <div class="notehd"></div>
   <div class="noteline">--</div><div class="noteline">--</div><div class="noteline">--</div><div class="noteline">--</div><div class="noteline">--</div><div class="noteline">--</div><div class="noteline">--</div><div class="noteline">--</div><div class="noteline">--</div><div class="noteline">--</div>
   <div class="capsule"></div><span class="noteup"></span><span class="notedn"></span>
   <div class="notefoot"><svg class="noteres" width="12" height="12" viewBox="0 0 12 12"><path d="M1 11L11 1M5 11l6-6" stroke="#888"/></svg></div>
  </div>
  <div class="dockbase"></div>
 </aside>
</div>
</div>
</body></html>
